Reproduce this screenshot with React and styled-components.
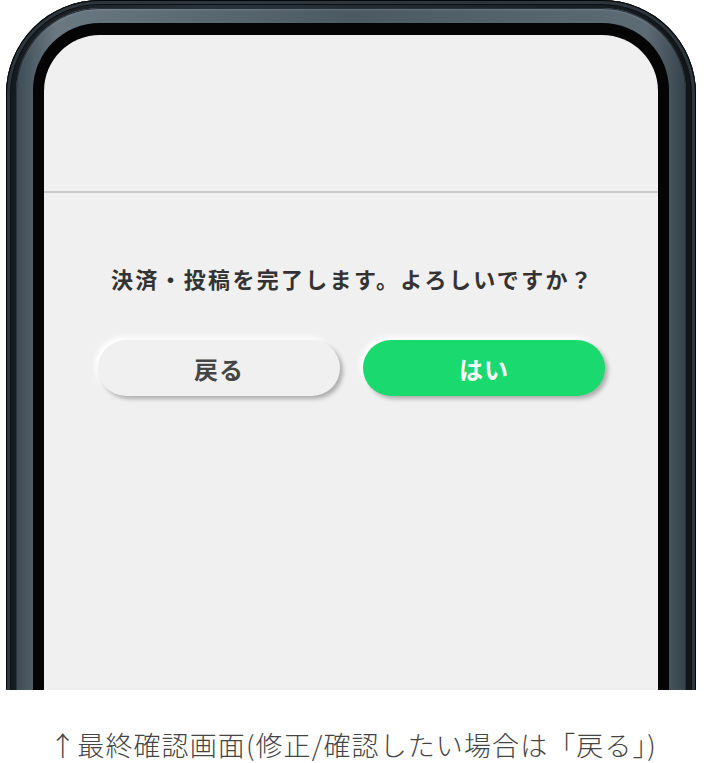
import React from 'react'
import styled, { createGlobalStyle } from 'styled-components'

const GlobalStyle = createGlobalStyle`
  html, body {
    margin: 0;
    padding: 0;
    background: #ffffff;
  }
  body {
    font-family: "Noto Sans CJK JP", "Noto Sans", sans-serif;
  }
`

function App() {
  return (
    <Page>
      <GlobalStyle />
      <PhoneClip>
        <Frame>
          <Rim>
            <Bezel>
              <Screen>
                <Header />
                <Body>
                  <Message>決済・投稿を完了します。よろしいですか？</Message>
                  <ButtonRow>
                    <PillButton>戻る</PillButton>
                    <PillButton primary>はい</PillButton>
                  </ButtonRow>
                </Body>
              </Screen>
            </Bezel>
          </Rim>
        </Frame>
      </PhoneClip>
      <Caption>↑最終確認画面(修正/確認したい場合は「戻る」)</Caption>
    </Page>
  )
}

export default App

const Page = styled.div`
    width: 704px;
    display: flex;
    flex-direction: column;
`
const PhoneClip = styled.div`
    height: 690px;
    overflow: hidden;
    padding: 0 8px 0 6px;
`
const Frame = styled.div`
    height: 820px;
    display: flex;
    padding: 8px 10px 0 10px;
    border-radius: 94px 94px 0 0;
    background: linear-gradient(90deg, #151a1e 0%, #2a333a 30%, #1e262b 70%, #121619 100%);
    box-shadow: inset 0 0 0 1px #050708, inset 0 0 0 4px #2c363c, inset 0 0 0 5px #0d1114;
`
const Rim = styled.div`
    flex: 1;
    display: flex;
    padding: 15px 17px 0 17px;
    border-radius: 84px 84px 0 0;
    background: linear-gradient(90deg, #3c4a53 0%, #6a7882 6%, #4a5962 50%, #5d6b74 94%, #35424a 100%);
    box-shadow: inset 0 0 0 1px #27323a, inset 0 2px 2px rgba(255,255,255,0.15);
`
const Bezel = styled.div`
    flex: 1;
    display: flex;
    padding: 12px 11px 0 11px;
    border-radius: 67px 67px 0 0;
    background: #050505;
`
const Screen = styled.div`
    flex: 1;
    display: flex;
    flex-direction: column;
    border-radius: 56px 56px 0 0;
    background: #f0f0f0;
    overflow: hidden;
`
const Header = styled.div`
    height: 156px;
    flex-shrink: 0;
    border-bottom: 2px solid #cacaca;
`
const Body = styled.div`
    display: flex;
    flex-direction: column;
    align-items: center;
    padding-top: 69px;
`
const Message = styled.p`
    margin: 0;
    font-size: 22px;
    line-height: 32px;
    font-weight: 700;
    letter-spacing: 2.3px;
    color: #333333;
    text-align: center;
    padding-left: 3px;
`
const ButtonRow = styled.div`
    display: flex;
    gap: 23px;
    margin-top: 46px;
    padding-left: 1px;
`
const PillButton = styled.button`
    width: 242px;
    height: 56px;
    border: none;
    border-radius: 28px;
    display: flex;
    align-items: center;
    justify-content: center;
    font-family: "Noto Sans CJK JP", "Noto Sans", sans-serif;
    font-size: 24px;
    font-weight: 700;
    letter-spacing: 1px;
    cursor: pointer;
    background: ${p => (p.primary ? '#1ad96e' : '#f0f0f0')};
    color: ${p => (p.primary ? '#ffffff' : '#454545')};
    box-shadow: 3px 3px 4px rgba(0, 0, 0, 0.28), -3px -3px 5px #ffffff;
`
const Caption = styled.p`
    margin: 37px 0 0 0;
    font-size: 27px;
    line-height: 36px;
    font-weight: 300;
    letter-spacing: 1.1px;
    color: #444444;
    text-align: center;
    padding-left: 2px;
`
